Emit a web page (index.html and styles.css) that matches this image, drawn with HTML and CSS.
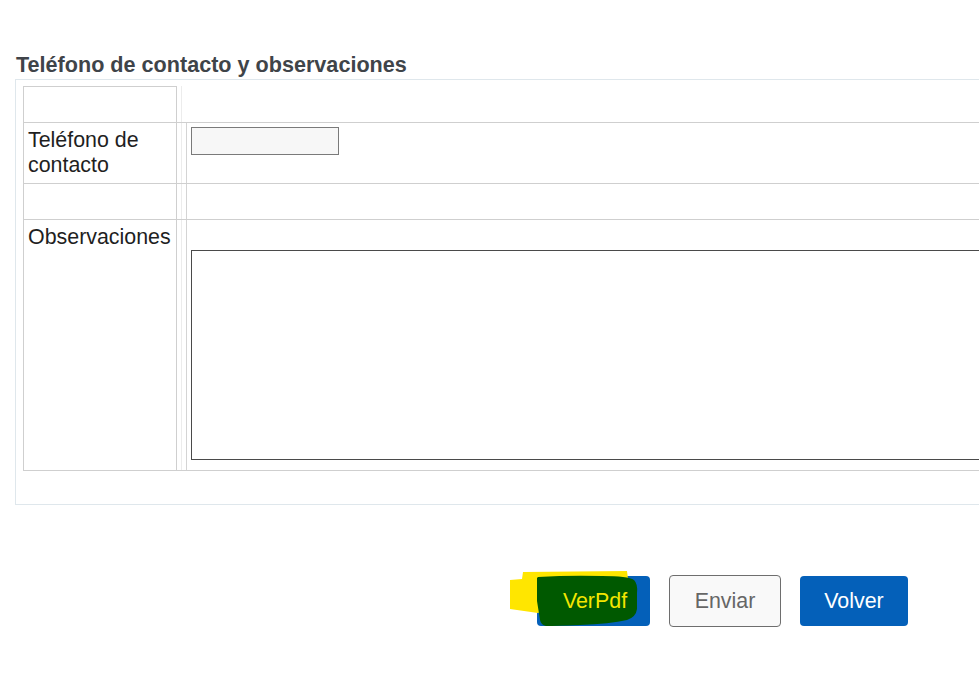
FILE: index.html
```html
<!DOCTYPE html>
<html lang="es">
<head>
<meta charset="utf-8">
<title>Teléfono de contacto y observaciones</title>
<link rel="stylesheet" href="styles.css">
</head>
<body>
<div class="page">
  <h2 class="title">Teléfono de contacto y observaciones</h2>
  <div class="box">
    <div class="table">
      <div class="row row-first">
        <div class="lab lab-top"></div>
        <div class="sep"></div>
        <div class="val val-open"></div>
      </div>
      <div class="row row-phone">
        <div class="lab">Teléfono de contacto</div>
        <div class="sep"></div>
        <div class="val"><input class="phone" type="text"></div>
      </div>
      <div class="row row-empty">
        <div class="lab"></div>
        <div class="sep"></div>
        <div class="val"></div>
      </div>
      <div class="row row-obs">
        <div class="lab">Observaciones</div>
        <div class="sep"></div>
        <div class="val"><textarea class="obs"></textarea></div>
      </div>
    </div>
  </div>
  <div class="actions">
    <button class="btn btn-blue btn-pdf" type="button">
      <svg class="scribble" width="140" height="58" viewBox="0 0 140 58" aria-hidden="true">
        <path d="M0,9 L12,8 L13,1 L117,0 L118,8 L28,42 L0,38 Z" fill="#ffe600"/>
        <path d="M28,6 Q60,4 92,5 Q118,5 124,9 Q128,13 127,22 L127,38 Q126,46 117,49 Q100,53 70,54 Q45,55 36,55 Q31,54 30,49 L27,30 L27,7 Z" fill="#005900"/>
      </svg>
      <span class="btn-label">VerPdf</span>
    </button>
    <button class="btn btn-light" type="button">Enviar</button>
    <button class="btn btn-blue btn-back" type="button">Volver</button>
  </div>
</div>
</body>
</html>
```

FILE: styles.css
```css
html, body {
  margin: 0;
  padding: 0;
  background: #ffffff;
  overflow: hidden;
}

.page {
  width: 1200px;
  padding-top: 53px;
  font-family: "Liberation Sans", Arial, sans-serif;
  color: #222222;
}

.title {
  margin: 0 0 2px 16px;
  font-size: 21.6px;
  line-height: 24px;
  font-weight: bold;
  color: #3f4449;
}

.box {
  margin-left: 15px;
  border: 1px solid #dfe7ec;
  padding: 6px 0 33px 7px;
}

.table {
  display: flex;
  flex-direction: column;
}

.row {
  display: flex;
  border-bottom: 1px solid #cfcfcf;
}

.lab {
  width: 154px;
  box-sizing: border-box;
  border-left: 1px solid #cfcfcf;
  border-right: 1px solid #cfcfcf;
  padding: 5px 4px 3px;
  font-size: 21.4px;
  line-height: 25.4px;
  color: #1f1f1f;
}

.lab-top {
  border-top: 1px solid #cfcfcf;
}

.sep {
  width: 4px;
  margin-right: 4px;
  border-right: 1px solid #ececec;
}

.val {
  flex: 1;
  border-left: 1px solid #d4d4d4;
  padding: 4px 0 0 4px;
}

.val-open {
  border-left-color: transparent;
}

.row-first { height: 36px; }
.row-phone { height: 60px; }
.row-empty { height: 35px; }
.row-obs { height: 250px; }

.phone {
  display: block;
  width: 148px;
  height: 28px;
  box-sizing: border-box;
  margin: 0;
  border: 1px solid #7a7a7a;
  background: #f7f7f7;
  padding: 2px 4px;
  font-family: "Liberation Sans", Arial, sans-serif;
  font-size: 16px;
}

.obs {
  display: block;
  width: 900px;
  height: 210px;
  box-sizing: border-box;
  margin: 26px 0 0 0;
  border: 1px solid #4a4a4a;
  background: #ffffff;
  padding: 4px;
  resize: none;
  font-family: "Liberation Sans", Arial, sans-serif;
  font-size: 16px;
}

.actions {
  display: flex;
  align-items: center;
  gap: 19px;
  margin-top: 70px;
  padding-left: 537px;
}

.btn {
  box-sizing: border-box;
  margin: 0;
  padding: 0;
  border-radius: 4px;
  font-family: "Liberation Sans", Arial, sans-serif;
  font-size: 21.4px;
  line-height: 24px;
  cursor: pointer;
}

.btn-blue {
  height: 50px;
  border: none;
  background: #0460b9;
  color: #ffffff;
}

.btn-pdf {
  position: relative;
  width: 113px;
  color: #f3e600;
}

.btn-back {
  width: 108px;
}

.btn-light {
  width: 112px;
  height: 52px;
  border: 1px solid #6e6e6e;
  background: #f9f9f9;
  color: #666666;
}

.scribble {
  position: absolute;
  left: -27px;
  top: -5px;
  display: block;
}

.btn-label {
  position: relative;
  padding-left: 3px;
}
```
